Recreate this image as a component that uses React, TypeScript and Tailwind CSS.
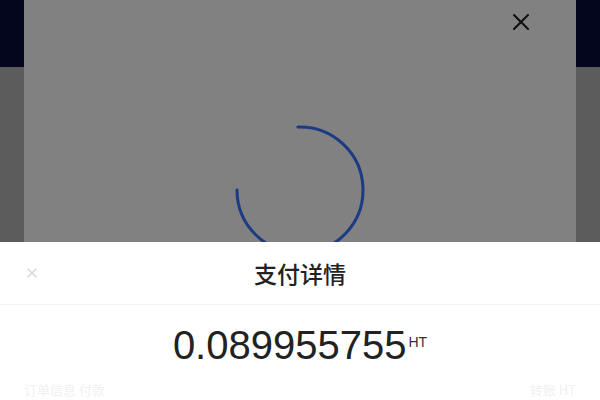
import { X } from "lucide-react";

function Spinner() {
  return (
    <svg width="132" height="132" viewBox="0 0 132 132" fill="none">
      <path
        d="M63.8 3.04 A63 63 0 1 1 3 66"
        stroke="#1b3b82"
        strokeWidth="3"
        strokeLinecap="round"
      />
    </svg>
  );
}

function SideStrip() {
  return (
    <div className="w-[24px] flex flex-col">
      <div className="h-[67px] bg-[#04061e]" />
      <div className="flex-1 bg-[#5c5c5c]" />
    </div>
  );
}

export default function App() {
  return (
    <div className="w-[600px] h-[400px] flex flex-col overflow-hidden bg-white font-['Liberation_Sans','Noto_Sans_CJK_SC',sans-serif]">
      <div className="h-[242px] flex shrink-0">
        <SideStrip />
        <div className="flex-1 bg-[#818181] flex flex-col items-center overflow-hidden">
          <div className="self-stretch flex justify-end pr-[41px] pt-[8px]">
            <X className="w-[28px] h-[28px] text-[#111]" strokeWidth={1.8} />
          </div>
          <div className="mt-[88px]">
            <Spinner />
          </div>
        </div>
        <SideStrip />
      </div>

      <div className="flex-1 bg-white flex flex-col">
        <div className="h-[63px] flex items-center relative border-b border-[#f3f3f3]">
          <X className="absolute left-[24px] w-[16px] h-[16px] text-[#d4d4d4]" strokeWidth={1.8} />
          <div className="flex-1 text-center text-[23px] font-medium text-[#222] font-['Noto_Sans_CJK_SC',sans-serif]">
            支付详情
          </div>
        </div>
        <div className="flex justify-center items-start pt-[17px]">
          <span className="text-[40px] leading-[46px] text-[#222]">0.089955755</span>
          <span className="text-[14px] text-[#333] mt-[10px] ml-[2px]">HT</span>
        </div>
        <div className="flex justify-between px-[24px] mt-[12px] text-[13px] text-[#f0f0f0] font-['Noto_Sans_CJK_SC',sans-serif]">
          <span>订单信息 付款</span>
          <span>转账 HT</span>
        </div>
      </div>
    </div>
  );
}
